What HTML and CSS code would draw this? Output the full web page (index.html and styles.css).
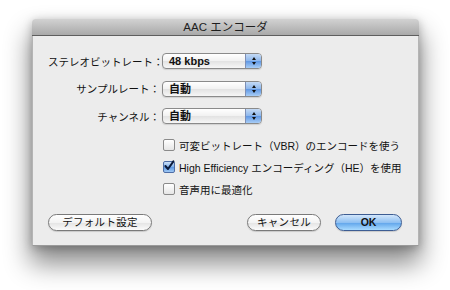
FILE: index.html
```html
<!DOCTYPE html>
<html>
<head>
	<meta charset="utf-8">
	<link rel="stylesheet" href="styles.css">
</head>
<body>
	<div class="desk">
		<div class="window">
			<div class="titlebar">AAC エンコーダ</div>
			<div class="content">
				<div class="form">
					<span class="label">ステレオビットレート：</span>
					<div class="popup"><span class="value">48 kbps</span><span class="stepper"><i class="up"></i><i class="down"></i></span></div>
					<span class="label">サンプルレート：</span>
					<div class="popup"><span class="value">自動</span><span class="stepper"><i class="up"></i><i class="down"></i></span></div>
					<span class="label">チャンネル：</span>
					<div class="popup"><span class="value">自動</span><span class="stepper"><i class="up"></i><i class="down"></i></span></div>
				</div>
				<div class="checks">
					<label class="check"><span class="box"></span>可変ビットレート（VBR）のエンコードを使う</label>
					<label class="check"><span class="box checked"><svg width="12" height="12" viewBox="0 0 12 12"><path d="M2.4 6 L5 9 L10.4 1.4" fill="none" stroke="#0b1a3a" stroke-width="2" stroke-linecap="round" stroke-linejoin="round"/></svg></span>High Efficiency エンコーディング（HE）を使用</label>
					<label class="check"><span class="box"></span>音声用に最適化</label>
				</div>
				<div class="buttons">
					<button class="btn btn_default">デフォルト設定</button>
					<div class="spacer"></div>
					<button class="btn btn_cancel">キャンセル</button>
					<button class="btn btn_ok">OK</button>
				</div>
			</div>
		</div>
	</div>
</body>
</html>
```

FILE: styles.css
```css
html, body {
	margin: 0;
	background: #ffffff;
}
body {
	width: 450px;
	height: 290px;
	font-family: "Liberation Sans", "Noto Sans CJK JP", sans-serif;
	font-size: 10.5px;
	color: #111111;
}
.desk {
	padding: 19px 31px 44px 32px;
}
.window {
	width: 387px;
	height: 227px;
	background: #ececec;
	box-shadow: 0 16px 26px 2px rgba(0, 0, 0, 0.45), 0 2px 10px rgba(0, 0, 0, 0.25);
	border-radius: 4px 4px 0 0;
	display: flex;
	flex-direction: column;
}
.titlebar {
	height: 16px;
	line-height: 16px;
	text-align: center;
	font-size: 11.5px;
	color: #1e1e1e;
	background: linear-gradient(#d2d2d2, #a9a9a9);
	border-bottom: 1px solid #5e5e5e;
	border-radius: 4px 4px 0 0;
}
.content {
	flex: 1;
	display: flex;
	flex-direction: column;
	padding: 17px 16px 14px 15px;
	border-left: 1px solid #b4b4b4;
	border-right: 1px solid #b4b4b4;
	border-bottom: 1px solid #9a9a9a;
}
.form {
	display: grid;
	grid-template-columns: 114px 100px;
	row-gap: 11.5px;
	align-items: center;
}
.label {
	text-align: right;
	white-space: nowrap;
	padding-right: 2px;
}
.popup {
	height: 14px;
	border: 1px solid #8a8a8a;
	border-radius: 4px;
	background: linear-gradient(#ffffff, #f1f1f1 50%, #e2e2e2 51%, #f6f6f6);
	display: flex;
	overflow: hidden;
	box-shadow: 0 1px 1px rgba(0, 0, 0, 0.12);
}
.value {
	flex: 1;
	padding-left: 6px;
	line-height: 14px;
	font-weight: bold;
	font-size: 11px;
}
.stepper {
	width: 15px;
	border-left: 1px solid #7d8fb6;
	background: linear-gradient(#c4daf5, #8cb6ec 50%, #5f97e4 51%, #a8cdf6);
	display: flex;
	flex-direction: column;
	align-items: center;
	justify-content: center;
	gap: 2px;
}
.stepper i {
	width: 0;
	height: 0;
	border-left: 2px solid transparent;
	border-right: 2px solid transparent;
}
.stepper .up {
	border-bottom: 3px solid #111111;
}
.stepper .down {
	border-top: 3px solid #111111;
}
.checks {
	display: flex;
	flex-direction: column;
	gap: 8px;
	margin-top: 14px;
	padding-left: 115px;
}
.check {
	display: flex;
	align-items: center;
	height: 14px;
	white-space: nowrap;
}
.box {
	flex-shrink: 0;
	width: 10px;
	height: 10px;
	border: 1px solid #8a8a8a;
	border-radius: 2px;
	background: linear-gradient(#ffffff, #e6e6e6);
	margin-right: 4px;
	position: relative;
}
.box.checked {
	border-color: #4f6ea6;
	background: linear-gradient(#cde0f7, #7fb0ea 50%, #5c97e2 51%, #9fc8f4);
}
.box svg {
	position: absolute;
	left: -1px;
	top: -2px;
}
.buttons {
	display: flex;
	align-items: center;
	margin-top: auto;
}
.spacer {
	flex: 1;
}
.btn {
	height: 17px;
	padding: 0;
	border: 1px solid #7a7a7a;
	border-radius: 9px;
	background: linear-gradient(#ffffff, #f3f3f3 50%, #e3e3e3 51%, #fbfbfb);
	font-family: "Liberation Sans", "Noto Sans CJK JP", sans-serif;
	font-size: 10.5px;
	color: #111111;
	line-height: 15px;
	box-shadow: 0 1px 1px rgba(0, 0, 0, 0.15);
}
.btn_default {
	width: 104px;
	letter-spacing: 0.3px;
}
.btn_cancel {
	width: 74px;
	margin-right: 14px;
	letter-spacing: 0.3px;
}
.btn_ok {
	width: 67px;
	border-color: #3d5d93;
	background: linear-gradient(#d2e6fb, #8fc0f2 50%, #5ea3ea 51%, #a9dbff);
	font-weight: bold;
}
```
